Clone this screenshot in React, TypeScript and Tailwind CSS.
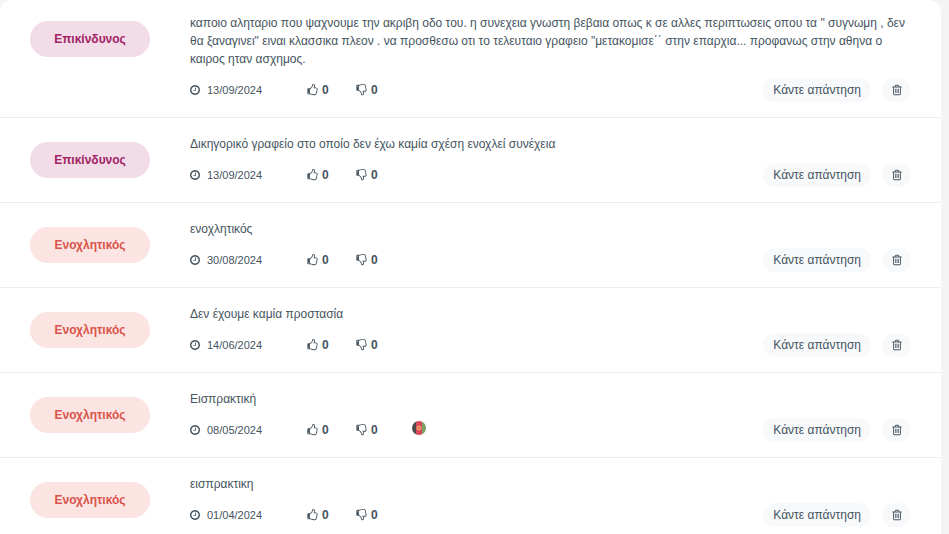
type Rating = "dangerous" | "annoying";

type Review = {
  id: number;
  rating: Rating;
  text: string;
  date: string;
  likes: number;
  dislikes: number;
  flag?: boolean;
};

const REVIEWS: Review[] = [
  {
    id: 1,
    rating: "dangerous",
    text: "καποιο αληταριο που ψαχνουμε την ακριβη οδο του. η συνεχεια γνωστη βεβαια οπως κ σε αλλες περιπτωσεις οπου τα \" συγνωμη , δεν θα ξαναγινει\" ειναι κλασσικα πλεον . να προσθεσω οτι το τελευταιο γραφειο \"μετακομισε΄΄ στην επαρχια... προφανως στην αθηνα ο καιρος ηταν ασχημος.",
    date: "13/09/2024",
    likes: 0,
    dislikes: 0,
  },
  { id: 2, rating: "dangerous", text: "Δικηγορικό γραφείο στο οποίο δεν έχω καμία σχέση ενοχλεί συνέχεια", date: "13/09/2024", likes: 0, dislikes: 0 },
  { id: 3, rating: "annoying", text: "ενοχλητικός", date: "30/08/2024", likes: 0, dislikes: 0 },
  { id: 4, rating: "annoying", text: "Δεν έχουμε καμία προστασία", date: "14/06/2024", likes: 0, dislikes: 0 },
  { id: 5, rating: "annoying", text: "Εισπρακτική", date: "08/05/2024", likes: 0, dislikes: 0, flag: true },
  { id: 6, rating: "annoying", text: "εισπρακτικη", date: "01/04/2024", likes: 0, dislikes: 0 },
];

const RATINGS: Record<Rating, { label: string; className: string }> = {
  dangerous: { label: "Επικίνδυνος", className: "bg-[#f2dce8] text-[#9f1f63]" },
  annoying: { label: "Ενοχλητικός", className: "bg-[#fbe4e1] text-[#d9534a]" },
};

function ClockIcon() {
  return (
    <svg viewBox="128 0 1536 1792" className="h-3 w-2.5 shrink-0 fill-current" aria-hidden="true">
      <path d="M1024 544v448q0 14-9 23t-23 9h-320q-14 0-23-9t-9-23v-64q0-14 9-23t23-9h224v-352q0-14 9-23t23-9h64q14 0 23 9t9 23zm416 352q0-148-73-273t-198-198-273-73-273 73-198 198-73 273 73 273 198 198 273 73 273-73 198-198 73-273zm224 0q0 209-103 385.5t-279.5 279.5-385.5 103-385.5-103-279.5-279.5-103-385.5 103-385.5 279.5-279.5 385.5-103 385.5 103 279.5 279.5 103 385.5z" />
    </svg>
  );
}

function ThumbIcon({ down = false }: { down?: boolean }) {
  return (
    <svg
      viewBox={down ? "0 -128 1536 1792" : "0 0 1536 1792"}
      className={`h-3 w-[11px] shrink-0 fill-current ${down ? "-scale-y-100" : ""}`}
      aria-hidden="true"
    >
      <path d="M256 1344q0-26-19-45t-45-19-45 19-19 45 19 45 45 19 45-19 19-45zm1152-576q0-51-39-89.5t-89-38.5h-352q0-58 48-159.5t48-160.5q0-98-32-145t-128-47q-26 26-38 85t-30.5 125.5-59.5 109.5q-22 23-77 91-4 5-23 30t-31.5 41-34.5 42.5-40 44-38.5 35.5-40 27-35.5 9h-32v640h32q13 0 31.5 3t33 6.5 38 11 35 11.5 35.5 12.5 29 10.5q211 73 342 73h121q192 0 192-167 0-26-5-56 30-16 47.5-52.5t17.5-73.5-18-69q53-50 53-119 0-25-10-55.5t-25-47.5q32-1 53.5-47t21.5-81zm128-1q0 89-49 163 9 33 9 69 0 77-38 144 3 21 3 43 0 101-60 178 1 139-85 219.5t-227 80.5h-129q-96 0-189.5-22.5t-216.5-65.5q-116-40-138-40h-288q-53 0-90.5-37.5t-37.5-90.5v-640q0-53 37.5-90.5t90.5-37.5h274q36-24 137-155 58-75 107-128 24-25 35.5-85.5t30.5-126.5 62-108q39-37 90-37 84 0 151 32.5t102 101.5 35 186q0 93-48 192h176q104 0 180 76t76 179z" />
    </svg>
  );
}

function TrashIcon() {
  return (
    <svg viewBox="0 0 1792 1792" className="size-3 fill-current" aria-hidden="true">
      <path d="M704 736v576q0 14-9 23t-23 9h-64q-14 0-23-9t-9-23v-576q0-14 9-23t23-9h64q14 0 23 9t9 23zm256 0v576q0 14-9 23t-23 9h-64q-14 0-23-9t-9-23v-576q0-14 9-23t23-9h64q14 0 23 9t9 23zm256 0v576q0 14-9 23t-23 9h-64q-14 0-23-9t-9-23v-576q0-14 9-23t23-9h64q14 0 23 9t9 23zm128 724v-948h-896v948q0 22 7 40.5t14.5 27 10.5 8.5h832q3 0 10.5-8.5t14.5-27 7-40.5zm-672-1076h448l-48-117q-7-9-17-11h-317q-10 2-17 11zm928 32v64q0 14-9 23t-23 9h-96v948q0 83-47 143.5t-113 60.5h-832q-66 0-113-58.5t-47-141.5v-952h-96q-14 0-23-9t-9-23v-64q0-14 9-23t23-9h309l70-167q15-37 54-63t79-26h320q40 0 79 26t54 63l70 167h309q14 0 23 9t9 23z" />
    </svg>
  );
}

function FlagIcon() {
  return (
    <svg viewBox="0 0 14 14" className="mb-1 ml-[34px] size-3.5 shrink-0" role="img" aria-label="Αφγανιστάν">
      <clipPath id="flag-circle">
        <circle cx="7" cy="7" r="7" />
      </clipPath>
      <g clipPath="url(#flag-circle)">
        <path fill="#4b4b4d" d="M0 0h4v14H0z" />
        <path fill="#d9475a" d="M4 0h6v14H4z" />
        <path fill="#7c9e63" d="M10 0h4v14h-4z" />
        <circle cx="7" cy="7" r="2" fill="#e8705a" stroke="#f2b06c" />
      </g>
    </svg>
  );
}

function ReviewRow({ review }: { review: Review }) {
  const rating = RATINGS[review.rating];
  return (
    <li className="flex items-start gap-10 border-b border-[#eeeeee] px-[30px] pt-[17px] pb-[15px] first:pt-3.5 last:border-b-0 last:pb-[7px]">
      <span className={`mt-[7px] flex h-9 w-[120px] shrink-0 items-center justify-center rounded-full font-bold ${rating.className}`}>
        {rating.label}
      </span>
      <div className="min-w-0 flex-1">
        <p>{review.text}</p>
        <div className="mt-2.5 flex items-center">
          <div className="flex w-[117px] items-center gap-[7px] text-[11px]">
            <ClockIcon />
            <time>{review.date}</time>
          </div>
          <button type="button" aria-label="Μου αρέσει" className="flex w-[49px] items-center gap-1 font-bold">
            <ThumbIcon /> {review.likes}
          </button>
          <button type="button" aria-label="Δεν μου αρέσει" className="flex items-center gap-1 font-bold">
            <ThumbIcon down /> {review.dislikes}
          </button>
          {review.flag && <FlagIcon />}
          <div className="ml-auto flex gap-[11px]">
            <button type="button" className="h-6 rounded-full bg-[#f8f9fb] px-2.5">
              Κάντε απάντηση
            </button>
            <button type="button" aria-label="Διαγραφή" className="flex h-6 w-[29px] items-center justify-center rounded-full bg-[#f8f9fb]">
              <TrashIcon />
            </button>
          </div>
        </div>
      </div>
    </li>
  );
}

export default function App() {
  return (
    <main className="min-h-screen bg-[#f4f4f4] pr-2 font-['Liberation_Sans',Arial,sans-serif] text-xs leading-[18px] text-[#45545e]">
      <ul className="rounded-t-xl bg-white">
        {REVIEWS.map((review) => (
          <ReviewRow key={review.id} review={review} />
        ))}
      </ul>
    </main>
  );
}
